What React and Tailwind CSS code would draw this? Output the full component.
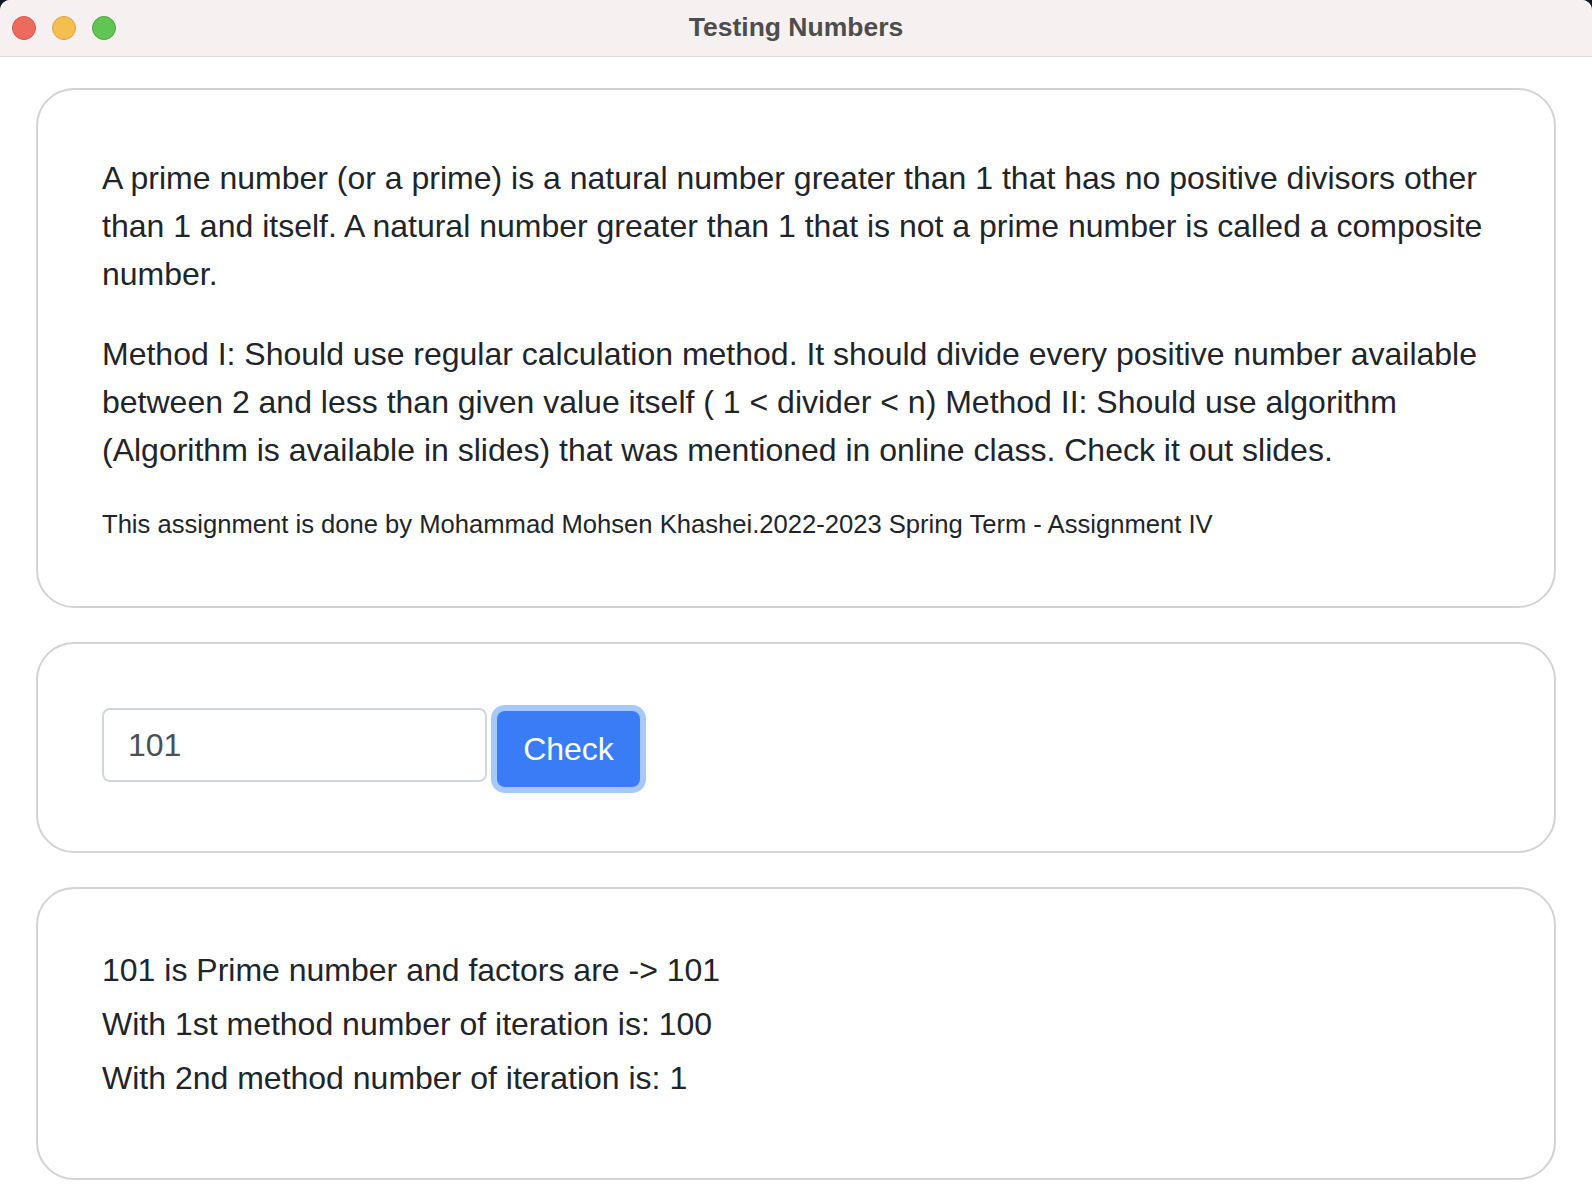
import React from "react";

export default function App() {
  return (
    <div className="w-[1592px] h-[1200px] bg-[#101826] overflow-hidden" style={{ fontFamily: '"Liberation Sans", Arial, sans-serif' }}>
      <div className="h-full bg-white rounded-tl-[10px] rounded-tr-[10px] overflow-hidden flex flex-col">
        {/* Title bar */}
        <div className="relative h-[57px] shrink-0 bg-[#f6f0f0] border-b border-[#dadada] flex items-center justify-center">
          <div className="absolute left-[12px] top-[16px] flex gap-[16px]">
            <span className="block w-[24px] h-[24px] rounded-full bg-[#ed6a5e] border border-[#d7574b]" />
            <span className="block w-[24px] h-[24px] rounded-full bg-[#f5bf4f] border border-[#d9a33f]" />
            <span className="block w-[24px] h-[24px] rounded-full bg-[#61c554] border border-[#4ea83f]" />
          </div>
          <div className="text-[26.5px] font-bold text-[#4d4d4d] leading-none mt-[-2px]">Testing Numbers</div>
        </div>

        {/* Content */}
        <div className="flex flex-col gap-[34px] px-[36px] pt-[31px] text-[#212529]">
          {/* Card 1 */}
          <div className="border-2 border-[#d3d3d3] rounded-[38px] p-[64px]">
            <p className="text-[32px] leading-[48px] mb-[32px]">
              A prime number (or a prime) is a natural number greater than 1 that has no positive divisors other than 1 and itself. A natural number greater than 1 that is not a prime number is called a composite number.
            </p>
            <p className="text-[32px] leading-[48px] mb-[32px]">
              Method I: Should use regular calculation method. It should divide every positive number available between 2 and less than given value itself ( 1 &lt; divider &lt; n) Method II: Should use algorithm (Algorithm is available in slides) that was mentioned in online class. Check it out slides.
            </p>
            <p className="text-[25.6px] leading-[36px]">
              This assignment is done by Mohammad Mohsen Khashei.2022-2023 Spring Term - Assignment IV
            </p>
          </div>

          {/* Card 2 */}
          <div className="border-2 border-[#d3d3d3] rounded-[38px] px-[64px] pt-[64px] pb-[64px]">
            <div className="flex items-start gap-[10px]">
              <div className="w-[385px] h-[74px] border-2 border-[#d2d6da] rounded-[8px] flex items-center px-[24px] text-[32px] text-[#495057]">
                101
              </div>
              <button className="mt-[3px] w-[143px] h-[76px] rounded-[8px] bg-[#3a7cf6] text-white text-[32px] flex items-center justify-center shadow-[0_0_0_6px_#a6c8fa]">
                Check
              </button>
            </div>
          </div>

          {/* Card 3 */}
          <div className="border-2 border-[#d3d3d3] rounded-[38px] px-[64px] pt-[62px] pb-[65px]">
            <p className="text-[32px] leading-[38px] mb-[16px]">101 is Prime number and factors are -&gt; 101</p>
            <p className="text-[32px] leading-[38px] mb-[16px]">With 1st method number of iteration is: 100</p>
            <p className="text-[32px] leading-[38px] mb-[16px]">With 2nd method number of iteration is: 1</p>
          </div>
        </div>
      </div>
    </div>
  );
}
